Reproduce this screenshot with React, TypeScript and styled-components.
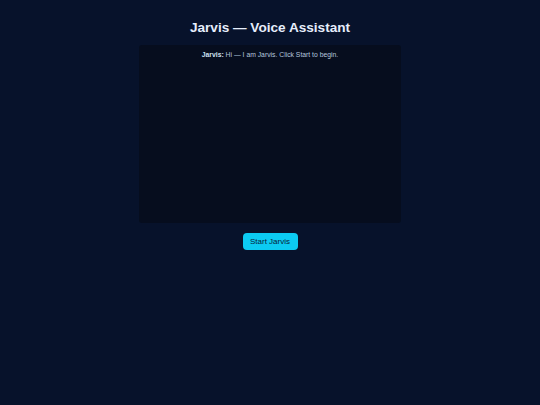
import React from 'react';
import styled, { createGlobalStyle } from 'styled-components';

const GlobalStyle = createGlobalStyle`
  html, body {
    margin: 0;
    padding: 0;
    background: #07122b;
    font-family: "Liberation Sans", Arial, sans-serif;
    color: #e6eefc;
  }
`;

const Page = styled.div`
  min-height: 405px;
  display: flex;
  flex-direction: column;
  align-items: center;
  padding-top: 20px;
  box-sizing: border-box;
`;

const Title = styled.h1`
  margin: 0 0 9px;
  font-size: 13.6px;
  line-height: 16px;
  font-weight: bold;
  color: #e6eefc;
`;

const ChatLog = styled.div`
  width: 262px;
  height: 178px;
  background: #060d1e;
  border-radius: 3px;
  box-sizing: border-box;
  padding: 5px 6px;
  font-size: 6.8px;
  color: #b4c6de;
  text-align: center;
`;

const Message = styled.div`
  line-height: 9px;
`;

const Speaker = styled.b`
  color: #cfe0f2;
`;

const StartButton = styled.button`
  margin-top: 10px;
  height: 17px;
  width: 55px;
  padding: 0;
  border: none;
  border-radius: 4px;
  background: #0ccbf2;
  color: #06233a;
  font-family: "Liberation Sans", Arial, sans-serif;
  font-size: 8px;
  cursor: pointer;
`;

export default function App() {
  return (
    <>
      <GlobalStyle />
      <Page>
        <Title>Jarvis — Voice Assistant</Title>
        <ChatLog>
          <Message>
            <Speaker>Jarvis:</Speaker> Hi — I am Jarvis. Click Start to begin.
          </Message>
        </ChatLog>
        <StartButton>Start Jarvis</StartButton>
      </Page>
    </>
  );
}
